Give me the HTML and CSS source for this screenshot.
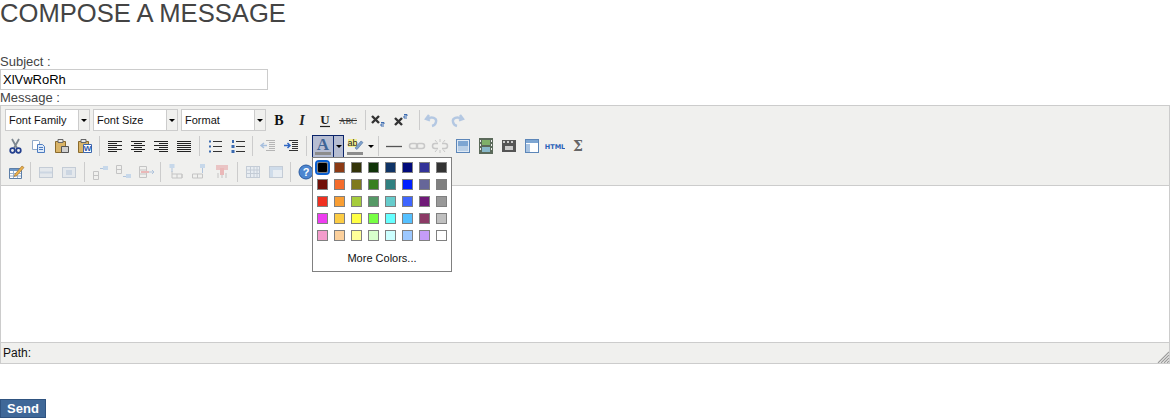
FILE: index.html
```html
<!DOCTYPE html>
<html lang="en">
<head>
    <meta charset="UTF-8">
    <title>Compose a message</title>
    <link rel="stylesheet" href="styles.css">
</head>
<body>
    <h1 class="page-title">COMPOSE A MESSAGE</h1>
    <form class="compose">
        <label class="field-label subject-label">Subject :</label>
        <input class="subject" type="text" value="XlVwRoRh">
        <label class="field-label">Message :</label>

        <div class="editor">
            <div class="toolbar">
                <div class="row row-one">
                    <div class="listbox"><span class="listbox-text">Font Family</span><span class="listbox-arrow"><i class="caret"></i></span></div>
                    <div class="listbox"><span class="listbox-text">Font Size</span><span class="listbox-arrow"><i class="caret"></i></span></div>
                    <div class="listbox"><span class="listbox-text">Format</span><span class="listbox-arrow"><i class="caret"></i></span></div>
                    <span class="btn first-btn"><svg viewBox="0 0 20 20"><text x="10" y="15" text-anchor="middle" class="t-b">B</text></svg></span>
                    <span class="btn"><svg viewBox="0 0 20 20"><text x="10" y="15" text-anchor="middle" class="t-i">I</text></svg></span>
                    <span class="btn"><svg viewBox="0 0 20 20"><text x="10" y="14" text-anchor="middle" class="t-u">U</text><path d="M5 16.500h10" stroke="#222" stroke-width="1.200"/></svg></span>
                    <span class="btn"><svg viewBox="0 0 20 20"><text x="10" y="14" text-anchor="middle" class="t-abc">ABC</text><path d="M1 10.500h18" stroke="#333"/></svg></span>
                    <span class="sep"></span>
                    <span class="btn"><svg viewBox="0 0 20 20"><path d="M3 6l7 7M10 6l-7 7" stroke="#333" stroke-width="2.400"/><path d="M12 12.500h3v1.500h-3v2h3" fill="none" stroke="#3a6ab0"/></svg></span>
                    <span class="btn"><svg viewBox="0 0 20 20"><path d="M3 8l7 7M10 8l-7 7" stroke="#333" stroke-width="2.400"/><path d="M12 4.500h3v1.500h-3v2h3" fill="none" stroke="#3a6ab0"/></svg></span>
                    <span class="sep"></span>
                    <span class="btn"><svg viewBox="0 0 20 20"><path d="M6 5L3 9l4 1.500M4 9c5-3 10-1 9 3-.4 2-2 3.500-4 4" fill="none" stroke="#b4c8e2" stroke-width="2.400"/></svg></span>
                    <span class="btn"><svg viewBox="0 0 20 20"><path d="M14 5l3 4-4 1.500M16 9c-5-3-10-1-9 3 .4 2 2 3.500 4 4" fill="none" stroke="#b4c8e2" stroke-width="2.400"/></svg></span>
                </div>

                <div class="row">
                    <span class="btn"><svg viewBox="0 0 20 20"><path d="M6 3l5 9M13 3l-5 9" stroke="#7d8790" stroke-width="1.800"/><circle cx="6.500" cy="14.500" r="2.300" fill="none" stroke="#24408e" stroke-width="1.700"/><circle cx="12.500" cy="14.500" r="2.300" fill="none" stroke="#24408e" stroke-width="1.700"/></svg></span>
                    <span class="btn"><svg viewBox="0 0 20 20"><path d="M3.500 4.500h6l1 1v8h-7z" fill="#fff" stroke="#8fa8c8"/><path d="M8.500 8.500h5l2 2v6h-7z" fill="#dfeaf8" stroke="#4d7cc0"/><path d="M10 11.500h4M10 13.500h4" stroke="#4d7cc0"/></svg></span>
                    <span class="btn"><svg viewBox="0 0 20 20"><path d="M3.500 5.500h10v11h-10z" fill="#d9b468" stroke="#8a6a2c"/><path d="M6 3.500h5v3H6z" fill="#e8e8e8" stroke="#666"/><path d="M9.500 10.500h7v6h-7z" fill="#d0d0d0" stroke="#555"/></svg></span>
                    <span class="btn"><svg viewBox="0 0 20 20"><path d="M3.500 5.500h10v11h-10z" fill="#d9b468" stroke="#8a6a2c"/><path d="M6 3.500h5v3H6z" fill="#e8e8e8" stroke="#666"/><path d="M8.500 8.500h8v8h-8z" fill="#fff" stroke="#3a66ae"/><text x="12.500" y="15" text-anchor="middle" class="t-w">W</text></svg></span>
                    <span class="sep"></span>
                    <span class="btn"><svg viewBox="0 0 20 20"><path d="M3 5.500h14M3 7.500h9M3 9.500h14M3 11.500h9M3 13.500h14M3 15.500h9" stroke="#222"/></svg></span>
                    <span class="btn"><svg viewBox="0 0 20 20"><path d="M3 5.500h14M6 7.500h8M3 9.500h14M6 11.500h8M3 13.500h14M6 15.500h8" stroke="#222"/></svg></span>
                    <span class="btn"><svg viewBox="0 0 20 20"><path d="M3 5.500h14M8 7.500h9M3 9.500h14M8 11.500h9M3 13.500h14M8 15.500h9" stroke="#222"/></svg></span>
                    <span class="btn"><svg viewBox="0 0 20 20"><path d="M3 5.500h14M3 7.500h14M3 9.500h14M3 11.500h14M3 13.500h14M3 15.500h14" stroke="#222"/></svg></span>
                    <span class="sep"></span>
                    <span class="btn"><svg viewBox="0 0 20 20"><path d="M8 5.500h9M8 10.500h9M8 15.500h9" stroke="#333"/><path d="M4 4.500h2v2H4zM4 9.500h2v2H4zM4 14.500h2v2H4z" fill="#3a6ab0"/></svg></span>
                    <span class="btn"><svg viewBox="0 0 20 20"><path d="M8 5.500h9M8 10.500h9M8 15.500h9" stroke="#333"/><path d="M4 4h2v3H4zM3.500 9h3v3h-3zM3.500 14h3v3h-3z" fill="#3a6ab0"/></svg></span>
                    <span class="sep"></span>
                    <span class="btn"><svg viewBox="0 0 20 20"><path d="M8 4.500h9M11 6.500h6M11 8.500h6M11 10.500h6M11 12.500h6M8 14.500h9" stroke="#b5b5b5"/><path d="M9 9.500H3M6 7L3 9.500 6 12" fill="none" stroke="#a8c0de" stroke-width="1.500"/></svg></span>
                    <span class="btn"><svg viewBox="0 0 20 20"><path d="M8 4.500h9M11 6.500h6M11 8.500h6M11 10.500h6M11 12.500h6M8 14.500h9" stroke="#333"/><path d="M3 9.500h6M6.500 7L9 9.500 6.500 12" fill="none" stroke="#2f67c4" stroke-width="1.500"/></svg></span>
                    <span class="sep color-sep"></span>
                    <span class="split split-active">
                        <span class="split-main"><svg viewBox="0 0 20 20"><text x="10" y="14" text-anchor="middle" class="t-a">A</text><path d="M2 17.500h16" stroke="#8c8c8c" stroke-width="3"/></svg></span>
                        <span class="split-drop"><i class="caret"></i></span>
                    </span>
                    <span class="split hilite">
                        <span class="split-main"><svg viewBox="0 0 20 20"><path d="M3 3h9v8H3z" fill="#f5f090"/><text x="7.500" y="10" text-anchor="middle" class="t-ab">ab</text><path d="M10 12l6-7 2 1.500-6 7z" fill="#7fa2cc" stroke="#4f72a2" stroke-width=".6"/><path d="M2 17.500h16" stroke="#8c8c8c" stroke-width="3"/></svg></span>
                        <span class="split-drop"><i class="caret"></i></span>
                    </span>
                    <span class="sep hr-sep"></span>
                    <span class="btn"><svg viewBox="0 0 20 20"><path d="M2 10.500h16" stroke="#555" stroke-width="1.300"/></svg></span>
                    <span class="btn"><svg viewBox="0 0 20 20"><rect x="2.500" y="7.500" width="8" height="5" rx="2.500" fill="none" stroke="#c8c8c8" stroke-width="1.500"/><rect x="9.500" y="7.500" width="8" height="5" rx="2.500" fill="none" stroke="#c8c8c8" stroke-width="1.500"/></svg></span>
                    <span class="btn"><svg viewBox="0 0 20 20"><path d="M8 7.500H5a2.500 2.500 0 0 0 0 5h3M12 7.500h3a2.500 2.500 0 0 1 0 5h-3" fill="none" stroke="#c8c8c8" stroke-width="1.500"/><path d="M10 3v3M10 14v3M5 4l2 2.500M15 4l-2 2.500M5 16l2-2.500M15 16l-2-2.500" stroke="#c8c8c8"/></svg></span>
                    <span class="btn"><svg viewBox="0 0 20 20"><rect x="3.500" y="3.500" width="13" height="13" fill="#dfe9f4" stroke="#5c86b8"/><path d="M5 5h10v5H5z" fill="#7ea6d2"/><path d="M5 10h10v5H5z" fill="#b9cfe6"/></svg></span>
                    <span class="btn"><svg viewBox="0 0 20 20"><path d="M3 2h14v16H3z" fill="#5b6a5a"/><path d="M6 4h8v5H6z" fill="#7fb069"/><path d="M6 11h8v5H6z" fill="#88b8c8"/><path d="M4 4h1v2H4zM4 8h1v2H4zM4 12h1v2H4zM15 4h1v2h-1zM15 8h1v2h-1zM15 12h1v2h-1z" fill="#eee"/></svg></span>
                    <span class="btn"><svg viewBox="0 0 20 20"><path d="M3 4h14v12H3z" fill="#555"/><path d="M4 5h2v2H4zM8 5h2v2H8zM12 5h2v2h-2zM6 10h8v4H6z" fill="#ccc"/></svg></span>
                    <span class="btn"><svg viewBox="0 0 20 20"><rect x="3.500" y="3.500" width="13" height="13" fill="#fff" stroke="#5c86b8"/><path d="M4 4h12v3H4z" fill="#7ea6d2"/><path d="M4 8h4v8H4z" fill="#a9c4e2"/></svg></span>
                    <span class="btn"><svg viewBox="0 0 20 20"><text x="10" y="13" text-anchor="middle" class="t-html">HTML</text></svg></span>
                    <span class="btn"><svg viewBox="0 0 20 20"><text x="10" y="15" text-anchor="middle" class="t-sigma">Σ</text></svg></span>
                </div>

                <div class="row">
                    <span class="btn"><svg viewBox="0 0 20 20"><path d="M3.500 6.500h12v10h-12z" fill="#fff" stroke="#5d7fa8"/><path d="M4 7h11v2H4z" fill="#6e98c8"/><path d="M4 11.500h11M4 14h11M7.500 9v7M11.500 9v7" stroke="#9bb2cc"/><path d="M9 12l7-8 2 1.500-7 8-3 1z" fill="#e8b04c" stroke="#9c6c2a" stroke-width=".6"/></svg></span>
                    <span class="sep"></span>
                    <span class="btn"><svg viewBox="0 0 20 20"><rect x="3.500" y="5.500" width="13" height="10" fill="#e4e8ec" stroke="#c4ccd6"/><path d="M4 9.500h12v2H4z" fill="#ccd6e2"/></svg></span>
                    <span class="btn"><svg viewBox="0 0 20 20"><rect x="3.500" y="5.500" width="13" height="10" fill="#e4e8ec" stroke="#c4ccd6"/><rect x="7" y="8" width="6" height="5" fill="#ccd6e2"/></svg></span>
                    <span class="sep"></span>
                    <span class="btn"><svg viewBox="0 0 20 20"><path d="M3.500 9.500h5v8h-5zM3.500 13.500h5" fill="none" stroke="#c4c4c4"/><path d="M10 6.500h3" stroke="#b0c4dc"/><path d="M13 4h5v4h-5z" fill="#c7d8ea"/></svg></span>
                    <span class="btn"><svg viewBox="0 0 20 20"><path d="M3.500 3.500h5v8h-5zM3.500 7.500h5" fill="none" stroke="#c4c4c4"/><path d="M10 14.500h3" stroke="#b0c4dc"/><path d="M13 12h5v4h-5z" fill="#c7d8ea"/></svg></span>
                    <span class="btn"><svg viewBox="0 0 20 20"><path d="M3.500 4.500h7v11h-7zM3.500 8h7M3.500 12h7" fill="none" stroke="#c4c4c4"/><path d="M5 9h8v2H5z" fill="#eab8b8"/><path d="M13 10h5M16 8l2 2-2 2" fill="none" stroke="#b0c4dc"/></svg></span>
                    <span class="sep"></span>
                    <span class="btn"><svg viewBox="0 0 20 20"><path d="M6 9v7M6 16h10v-4h-10M11 12v4M16 12v4" fill="none" stroke="#c4c4c4"/><path d="M3.500 2h5v4h-5z" fill="#c7d8ea"/><path d="M6 6v4" stroke="#b0c4dc"/></svg></span>
                    <span class="btn"><svg viewBox="0 0 20 20"><path d="M3.500 12h10v4h-10zM8.500 12v4" fill="none" stroke="#c4c4c4"/><path d="M11 2h5v4h-5z" fill="#c7d8ea"/><path d="M13.500 6v5" stroke="#b0c4dc"/></svg></span>
                    <span class="btn"><svg viewBox="0 0 20 20"><path d="M10 5v11M6 11v5M14 11v5" fill="none" stroke="#c4c4c4"/><path d="M4 3h12v5H4z" fill="#eac4c4"/><path d="M8 6h4v7H8z" fill="#eab8b8"/></svg></span>
                    <span class="sep"></span>
                    <span class="btn"><svg viewBox="0 0 20 20"><rect x="3.500" y="4.500" width="13" height="11" fill="#e8edf2" stroke="#c4ccd6"/><path d="M4 8h12M4 11.500h12M7.500 5v10M11 5v10M14 5v10" stroke="#c4ccd6"/></svg></span>
                    <span class="btn"><svg viewBox="0 0 20 20"><rect x="3.500" y="4.500" width="13" height="11" fill="#e8edf2" stroke="#c4ccd6"/><path d="M4 5h12v3H4zM4 8h3v7H4z" fill="#cfdcea"/></svg></span>
                    <span class="sep"></span>
                    <span class="btn"><svg viewBox="0 0 20 20"><circle cx="10" cy="10" r="7" fill="#4d86d0" stroke="#2a5aa0"/><text x="10" y="14" text-anchor="middle" class="t-help">?</text></svg></span>
                </div>
            </div>

            <div class="edit-area"></div>

            <div class="statusbar">
                <span class="path">Path:</span>
                <svg class="grip" viewBox="0 0 12 12"><path d="M1 12L12 1M4 12l8-8M7 12l5-5M10 12l2-2" stroke="#9a9a9a" stroke-width="1.100"/></svg>
            </div>

            <div class="color-menu">
                <div class="swatches">
                    <span class="swatch swatch-current" style="background:#000000"></span>
                    <span class="swatch" style="background:#8c3a14"></span>
                    <span class="swatch" style="background:#333308"></span>
                    <span class="swatch" style="background:#0f3308"></span>
                    <span class="swatch" style="background:#0f3366"></span>
                    <span class="swatch" style="background:#000a7a"></span>
                    <span class="swatch" style="background:#333399"></span>
                    <span class="swatch" style="background:#333333"></span>
                    <span class="swatch" style="background:#721008"></span>
                    <span class="swatch" style="background:#f56c2c"></span>
                    <span class="swatch" style="background:#7f7a1e"></span>
                    <span class="swatch" style="background:#388020"></span>
                    <span class="swatch" style="background:#308080"></span>
                    <span class="swatch" style="background:#0020ff"></span>
                    <span class="swatch" style="background:#666699"></span>
                    <span class="swatch" style="background:#808080"></span>
                    <span class="swatch" style="background:#f03020"></span>
                    <span class="swatch" style="background:#f99e33"></span>
                    <span class="swatch" style="background:#a6cc3c"></span>
                    <span class="swatch" style="background:#559966"></span>
                    <span class="swatch" style="background:#66cccc"></span>
                    <span class="swatch" style="background:#3f66ff"></span>
                    <span class="swatch" style="background:#701a78"></span>
                    <span class="swatch" style="background:#999999"></span>
                    <span class="swatch" style="background:#ee3cf0"></span>
                    <span class="swatch" style="background:#fccc44"></span>
                    <span class="swatch" style="background:#ffff44"></span>
                    <span class="swatch" style="background:#77ff44"></span>
                    <span class="swatch" style="background:#66ffff"></span>
                    <span class="swatch" style="background:#55c0ff"></span>
                    <span class="swatch" style="background:#8c3a66"></span>
                    <span class="swatch" style="background:#c0c0c0"></span>
                    <span class="swatch" style="background:#f49ccc"></span>
                    <span class="swatch" style="background:#fcd09c"></span>
                    <span class="swatch" style="background:#ffff99"></span>
                    <span class="swatch" style="background:#d8ffcc"></span>
                    <span class="swatch" style="background:#ccffff"></span>
                    <span class="swatch" style="background:#9cc8ff"></span>
                    <span class="swatch" style="background:#c49cf8"></span>
                    <span class="swatch" style="background:#ffffff"></span>
                </div>
                <div class="more-colors">More Colors...</div>
            </div>
        </div>

        <button class="send" type="button">Send</button>
    </form>
</body>
</html>
```

FILE: styles.css
```css
html, body {
    margin: 0;
    padding: 0;
    height: 418px;
    overflow: hidden;
    background: #fff;
}

body {
    font-family: "Liberation Sans", Arial, sans-serif;
    font-size: 13px;
    color: #444;
}

.page-title {
    margin: 0;
    font-size: 25.6px;
    font-weight: normal;
    line-height: 26px;
    color: #444;
}

.compose {
    display: flex;
    flex-direction: column;
    align-items: flex-start;
}

.field-label {
    line-height: 16px;
    height: 15px;
}

.subject-label {
    margin-top: 28px;
}

.subject {
    box-sizing: border-box;
    width: 268px;
    height: 21px;
    margin: 0;
    padding: 0 2px;
    border: 1px solid #ccc;
    font: 13px "Liberation Sans", Arial, sans-serif;
    color: #000;
}

/* editor */
.editor {
    position: relative;
    box-sizing: border-box;
    width: 1170px;
    height: 259px;
    border: 1px solid #ccc;
    display: flex;
    flex-direction: column;
}

.toolbar {
    background: #f0f0ee;
    border-bottom: 1px solid #ccc;
    height: 80px;
    box-sizing: border-box;
    padding-top: 1px;
}

.row {
    display: flex;
    align-items: center;
    height: 26px;
    padding-left: 3px;
}

.row-one {
    padding-left: 4px;
}

.listbox {
    display: flex;
    box-sizing: border-box;
    width: 85px;
    height: 22px;
    margin-right: 3px;
    border: 1px solid #ccc;
    background: #fff;
    font: 11px "Liberation Sans", Verdana, sans-serif;
    color: #111;
}

.listbox-text {
    flex: 1;
    line-height: 20px;
    padding-left: 3px;
}

.listbox-arrow {
    width: 10px;
    background: #f0f0ee;
    border-left: 1px solid #ccc;
    display: flex;
    align-items: center;
    justify-content: center;
}

.caret {
    display: block;
    width: 0;
    height: 0;
    border-left: 3px solid transparent;
    border-right: 3px solid transparent;
    border-top: 3px solid #000;
}

.btn {
    display: flex;
    justify-content: center;
    width: 23px;
    height: 20px;
    flex: none;
}

.first-btn {
    margin-left: -2px;
}

.btn svg, .split-main svg {
    display: block;
    width: 20px;
    height: 20px;
}

.sep {
    flex: none;
    width: 7.5px;
    height: 20px;
    background: linear-gradient(#ccc, #ccc) center / 1px 100% no-repeat;
}

.row-one .sep {
    width: 8px;
    background-position: 5.5px 0;
}

.color-sep {
    margin-right: 2px;
}

.hr-sep {
    margin-left: -1px;
}

.split {
    display: flex;
    height: 23px;
    flex: none;
    box-sizing: border-box;
}

.split-main {
    width: 20px;
    height: 22px;
    padding: 1px;
    display: block;
}

.split-drop {
    width: 10px;
    display: flex;
    align-items: center;
    justify-content: center;
}

.split-active {
    width: 32px;
    border: 1px solid #0a246a;
    background: #b6bdd2;
}

.split-active .split-main {
    width: 20px;
    height: 21px;
    padding: 0;
    border-right: 1px solid #0a246a;
}

.hilite {
    width: 32px;
}

.hilite .split-main {
    padding-top: 1px;
}

.t-b { font: bold 14px "Liberation Serif", serif; fill: #111; }
.t-i { font: italic bold 14px "Liberation Serif", serif; fill: #222; }
.t-u { font: bold 13px "Liberation Serif", serif; fill: #222; }
.t-abc { font: 8.5px "Liberation Serif", serif; fill: #333; }
.t-w { font: bold 8px "Liberation Sans", sans-serif; fill: #2c58a8; }
.t-a { font: bold 17px "Liberation Serif", serif; fill: #3e6496; }
.t-ab { font: 9px "Liberation Sans", sans-serif; fill: #222; }
.t-html { font: bold 6.500px "DejaVu Sans", sans-serif; fill: #2a62b8; }
.t-sigma { font: bold 14px "DejaVu Serif", serif; fill: #666; }
.t-help { font: bold 11px "Liberation Sans", sans-serif; fill: #fff; }

/* content area */
.edit-area {
    flex: 1;
    background: #fff;
}

.statusbar {
    display: flex;
    align-items: center;
    justify-content: space-between;
    box-sizing: border-box;
    height: 21px;
    padding-left: 2px;
    background: #f0f0ee;
    border-top: 1px solid #ccc;
    font: 12px "Liberation Sans", Arial, sans-serif;
    color: #111;
}

.grip {
    width: 12px;
    height: 12px;
    align-self: flex-end;
}

/* colour menu */
.color-menu {
    position: absolute;
    left: 311px;
    top: 51px;
    box-sizing: border-box;
    width: 140px;
    height: 115px;
    padding: 4px 0 0 4px;
    background: #fff;
    border: 1px solid #808080;
}

.swatches {
    display: grid;
    grid-template-columns: repeat(8, 11px);
    grid-auto-rows: 11px;
    gap: 6px;
}

.swatch {
    border: 1px solid #808080;
    box-sizing: border-box;
    display: block;
}

.swatch-current {
    outline: 2px solid #0a5fd0;
    border-radius: 2px;
}

.more-colors {
    margin-top: 9px;
    margin-left: -4px;
    text-align: center;
    font: 11px "Liberation Sans", Verdana, sans-serif;
    line-height: 16px;
    color: #111;
}

.send {
    margin-top: 35px;
    box-sizing: border-box;
    width: 46px;
    height: 19px;
    padding: 0;
    border: 1px solid #2f5380;
    background: #3f6898;
    color: #fff;
    font: bold 13px "Liberation Sans", Arial, sans-serif;
}
```
